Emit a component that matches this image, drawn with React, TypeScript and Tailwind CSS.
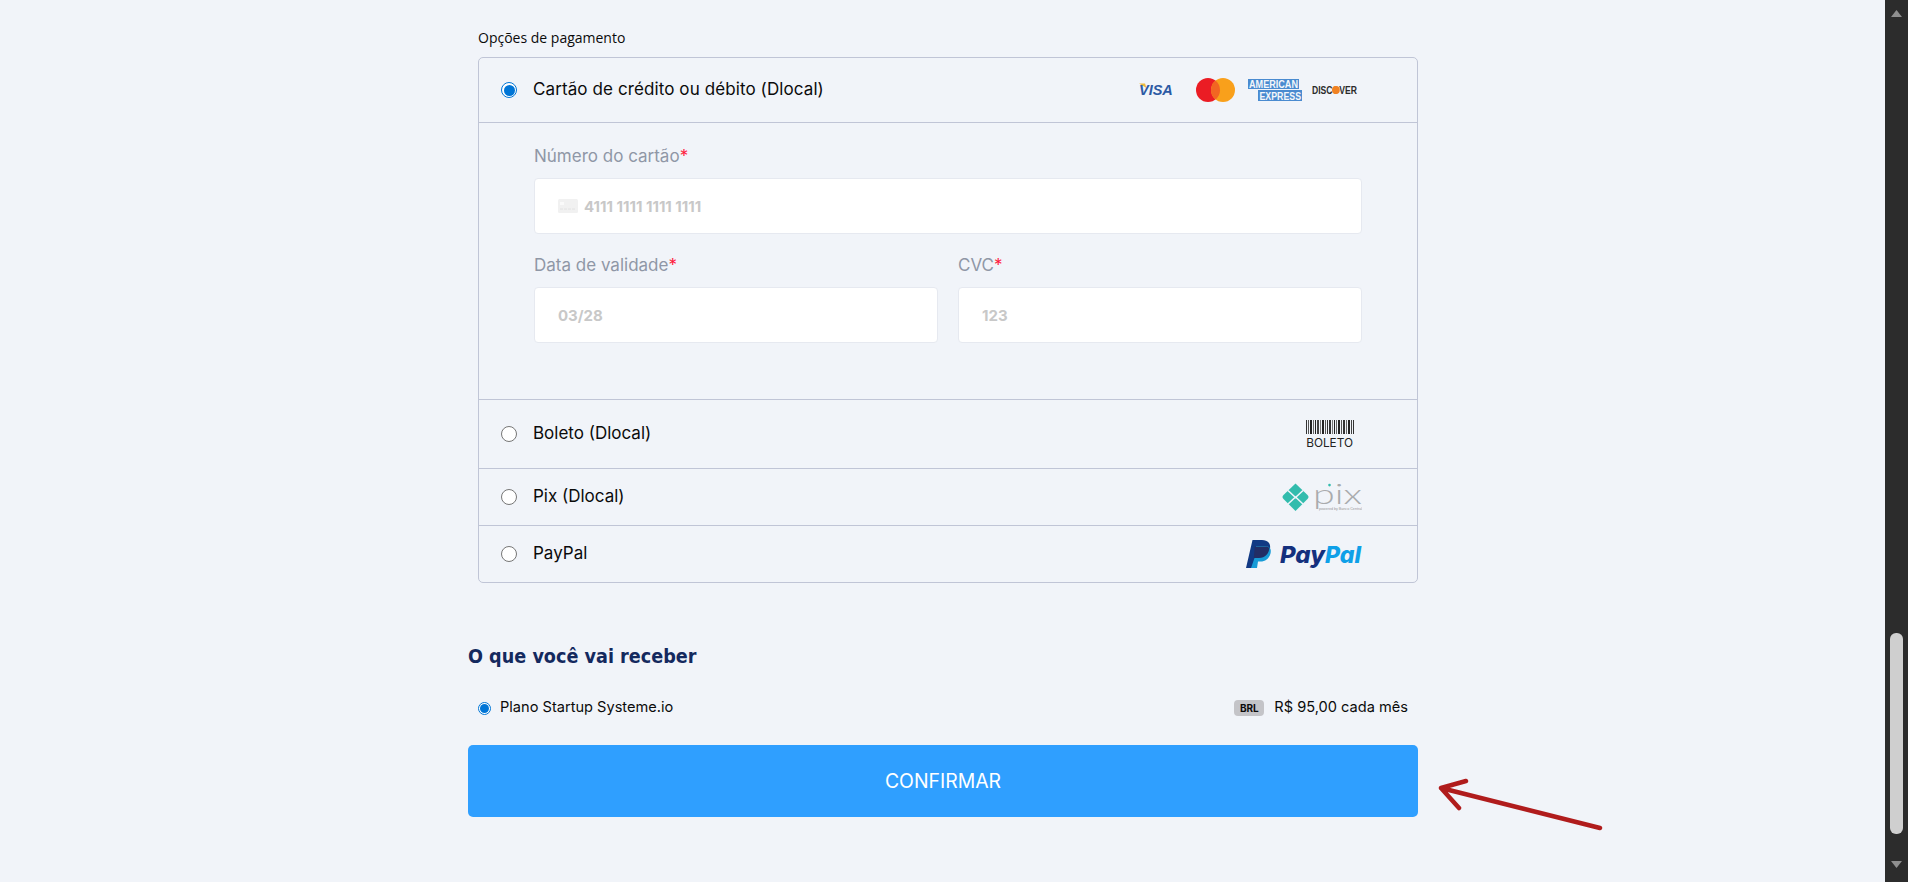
import React from "react";

const poppins = "font-['Inter','Liberation_Sans',sans-serif]";

function Radio({ checked = false, small = false }: { checked?: boolean; small?: boolean }) {
  const size = small ? "w-[13px] h-[13px]" : "w-4 h-4";
  if (checked) {
    return (
      <span className={`${size} shrink-0 rounded-full border border-[#0075d6] bg-white flex items-center justify-center`}>
        <span className={`${small ? "w-[9px] h-[9px]" : "w-[11px] h-[11px]"} rounded-full bg-[#0075d6]`} />
      </span>
    );
  }
  return <span className={`${size} shrink-0 rounded-full border border-[#767676] bg-white`} />;
}

function Visa() {
  return (
    <svg width="36" height="22" viewBox="0 -3 36 22" className="shrink-0">
      <path d="M0 1.5 L6 1.5 L7.5 6 Z" fill="#f0b83a" />
      <text x="0" y="13" fontFamily="Liberation Sans" fontWeight="700" fontStyle="italic" fontSize="14.5" fill="#2c5aa4">VISA</text>
    </svg>
  );
}

function Mastercard() {
  return (
    <svg width="39" height="24" viewBox="0 0 39 24" className="shrink-0">
      <circle cx="12" cy="12" r="12" fill="#eb1c24" />
      <circle cx="27" cy="12" r="12" fill="#f9a01b" />
      <path d="M19.5 2.6 A12 12 0 0 1 19.5 21.4 A12 12 0 0 1 19.5 2.6 Z" fill="#f26522" />
    </svg>
  );
}

function Amex() {
  return (
    <svg width="54" height="30" viewBox="0 -4 54 30" className="shrink-0">
      <rect x="0" y="0" width="51" height="10" fill="#4a8bd0" />
      <rect x="10" y="11" width="44" height="11" fill="#4a8bd0" />
      <text x="1" y="7.4" transform="scale(1 1.2)" fontFamily="Liberation Sans" fontWeight="700" fontSize="9.1" fill="#f4f7fb">AMERICAN</text>
      <text x="11.5" y="17.1" transform="scale(1 1.2)" fontFamily="Liberation Sans" fontWeight="700" fontSize="8.8" fill="#f4f7fb">EXPRESS</text>
    </svg>
  );
}

function Discover() {
  return (
    <svg width="46" height="16" viewBox="0 -2 46 16" className="shrink-0">
      <text x="0" y="8" transform="scale(1 1.25)" fontFamily="Liberation Sans" fontWeight="700" fontSize="8.6" fill="#2b2b2b">DISC<tspan fill="#f08223">O</tspan>VER</text>
      <circle cx="23.9" cy="6" r="3.9" fill="#f08223" />
    </svg>
  );
}

function Boleto() {
  const bars: [number, number, string][] = [
    [0, 1, "#333"], [2, 1, "#555"], [4, 2, "#222"], [7, 1, "#666"], [9, 1, "#222"], [11, 2, "#444"], [14, 1, "#777"], [16, 2, "#222"],
    [19, 1, "#555"], [21, 1, "#333"], [23, 2, "#333"], [26, 1, "#777"], [28, 1, "#222"], [30, 1, "#666"], [32, 2, "#222"], [35, 1, "#555"],
    [37, 2, "#333"], [40, 1, "#666"], [42, 2, "#222"], [45, 1, "#444"], [47, 1, "#333"],
  ];
  return (
    <svg width="48" height="34" viewBox="0 -3 48 34" className="shrink-0 mr-[8px]">
      {bars.map(([x, w, c]) => (
        <rect key={x} x={x} y="0" width={w} height="14" fill={c} />
      ))}
      <text x="0.2" y="27" fontFamily="Inter" fontSize="11.8" fill="#222">BOLETO</text>
    </svg>
  );
}

function Pix() {
  return (
    <svg width="80" height="46" viewBox="0 -9.5 80 46" className="shrink-0 my-[-6px]">
      <path d="M13.5 0 L25.5 11.5 Q27.5 13.5 25.5 15.5 L13.5 27.5 L1.5 15.5 Q-0.5 13.5 1.5 11.5 Z" fill="#32bcad" />
      <path d="M6 7 L13.5 14 L21 7 M6 20.5 L13.5 13.5 L21 20.5" fill="none" stroke="#f0f4fa" strokeWidth="1.6" />
      <text x="31" y="20" fontFamily="Lato" fontWeight="300" fontSize="27" fill="#a9abad" textLength="49" lengthAdjust="spacingAndGlyphs">pix</text>
      <circle cx="47.5" cy="1.6" r="1.3" fill="#32bcad" />
      <text x="37" y="26.5" fontFamily="Liberation Sans" fontSize="3" fill="#9a9a9a" textLength="43" lengthAdjust="spacingAndGlyphs">powered by Banco Central</text>
    </svg>
  );
}

function PayPal() {
  return (
    <svg width="116" height="34" viewBox="0 -3 116 34" className="shrink-0">
      <path d="M6.5 0 H16 C22 0 25 3.5 24 9 C23 15 18.5 18 13 18 H9.5 L8 28 H0 Z" fill="#113984" />
      <path d="M10 6 H19 C24.5 6 25.5 10 24.5 13.5 C23 19 19 21.5 14.5 21.5 H12 L11 28 H5 L8.5 18 Z" fill="#179bd7" />
      <path d="M8.8 6.5 H20 C20.8 6.5 22 7 23.4 7.8 C23.2 13.5 19 18 13 18 H7.8 Z" fill="#222d65" />
      <text x="34" y="23" fontFamily="Inter" fontWeight="800" fontStyle="italic" fontSize="23" fill="#14307e" textLength="45" lengthAdjust="spacingAndGlyphs">Pay</text>
      <text x="79" y="23" fontFamily="Inter" fontWeight="800" fontStyle="italic" fontSize="23" fill="#0ea0e8" textLength="36" lengthAdjust="spacingAndGlyphs">Pal</text>
    </svg>
  );
}

function CardGlyph() {
  return (
    <svg width="20" height="14" viewBox="0 0 20 14" className="shrink-0">
      <rect width="20" height="14" rx="1.5" fill="#f1f1f1" />
      <rect x="2" y="3" width="4" height="3" fill="#fafafa" />
      <path d="M2 10 H18" stroke="#e2e2e2" strokeWidth="1" strokeDasharray="3 1" />
    </svg>
  );
}

function Field({ label, placeholder, icon = false, className = "" }: { label: string; placeholder: string; icon?: boolean; className?: string }) {
  return (
    <div className={`flex flex-col ${className}`}>
      <label className={`h-[22px] text-[17px] leading-[22px] text-[#8f97a6] ${poppins}`}>
        {label}
        <span className="text-[#ff1a3c]">*</span>
      </label>
      <div className="mt-[11px] h-[56px] rounded-[4px] border border-[#e6e9f0] bg-white pl-[23px] flex items-center gap-[6px]">
        {icon && <CardGlyph />}
        <span className="pt-[2px] font-['Inter',sans-serif] text-[15px] font-bold text-[#c8c8c8]">{placeholder}</span>
      </div>
    </div>
  );
}

function Row({ label, logo, height }: { label: string; logo: React.ReactNode; height: string }) {
  return (
    <div className={`${height} flex items-center border-t border-[#c0c5d6] pl-[22px] pr-[55px]`}>
      <Radio />
      <span className={`ml-[16px] text-[17px] text-[#0b0b0b] ${poppins}`}>{label}</span>
      <span className="ml-auto flex items-center">{logo}</span>
    </div>
  );
}

export default function App() {
  return (
    <div className="relative h-[882px] w-full overflow-hidden flex bg-[#f1f4f9]">
      <main className="flex-1 min-w-0 pl-[468px]">
        <div className="w-[950px]">
          <div className="pl-[10px] pt-[27px]">
            <h2 className="h-[22px] font-['Open_Sans',sans-serif] text-[14px] leading-[22px] text-[#0b0b0b]">Opções de pagamento</h2>
            <div className="mt-[8px] w-[940px] rounded-[5px] border border-[#c0c5d6]">
              <div className="h-[64px] flex items-center pl-[22px] pr-[59px]">
                <Radio checked />
                <span className={`ml-[16px] text-[17px] tracking-[0.1px] text-[#0b0b0b] ${poppins}`}>Cartão de crédito ou débito (Dlocal)</span>
                <span className="ml-auto flex items-center">
                  <Visa />
                  <span className="ml-[21px]"><Mastercard /></span>
                  <span className="ml-[13px]"><Amex /></span>
                  <span className="ml-[10px]"><Discover /></span>
                </span>
              </div>
              <div className="h-[277px] border-t border-[#c0c5d6] pl-[55px] pr-[55px] pt-[22px]">
                <Field label="Número do cartão" placeholder="4111 1111 1111 1111" icon />
                <div className="mt-[20px] flex gap-[20px]">
                  <Field label="Data de validade" placeholder="03/28" className="w-[404px]" />
                  <Field label="CVC" placeholder="123" className="flex-1" />
                </div>
              </div>
              <Row label="Boleto (Dlocal)" logo={<Boleto />} height="h-[69px]" />
              <Row label="Pix (Dlocal)" logo={<Pix />} height="h-[57px]" />
              <Row label="PayPal" logo={<PayPal />} height="h-[57px]" />
            </div>
          </div>
          <h2 className="mt-[60px] h-[28px] font-['DejaVu_Sans_Condensed','DejaVu_Sans',sans-serif] text-[19.6px] leading-[28px] font-bold text-[#14295e]">O que você vai receber</h2>
          <div className="mt-[27px] h-[20px] flex items-center pl-[10px] pr-[10px]">
            <Radio checked small />
            <span className={`ml-[9px] text-[14.6px] text-[#0b0b0b] ${poppins}`}>Plano Startup Systeme.io</span>
            <span className="ml-auto flex h-[16px] w-[30px] items-center justify-center rounded-[4px] bg-[#c4c4c8] font-['Inter',sans-serif] text-[10px] font-bold text-[#0b0b0b]">BRL</span>
            <span className={`ml-[10px] text-[14.6px] text-[#0b0b0b] ${poppins}`}>R$ 95,00 cada mês</span>
          </div>
          <button className={`mt-[27px] h-[72px] w-full rounded-[5px] bg-[#2f9fff] pt-[2px] text-[19.4px] text-white ${poppins}`}>CONFIRMAR</button>
        </div>
      </main>
      <aside className="w-[23px] shrink-0 bg-[#2c2c2c] flex flex-col items-center">
        <svg width="11" height="7" viewBox="0 0 11 7" className="mt-[10px] shrink-0"><path d="M5.5 0 L11 7 H0 Z" fill="#8f8f8f" /></svg>
        <div className="mt-[616px] h-[201px] w-[13px] rounded-[6px] bg-[#cfcfcf]" />
        <svg width="11" height="7" viewBox="0 0 11 7" className="mt-[27px] shrink-0"><path d="M0 0 H11 L5.5 7 Z" fill="#8f8f8f" /></svg>
      </aside>
      <svg width="170" height="56" viewBox="0 0 170 56" className="absolute left-[1436px] top-[776px]">
        <path d="M164 52 L5 12 M30 5 L5 12 L23 32" fill="none" stroke="#b01c1c" strokeWidth="4.5" strokeLinecap="round" strokeLinejoin="round" />
      </svg>
    </div>
  );
}
